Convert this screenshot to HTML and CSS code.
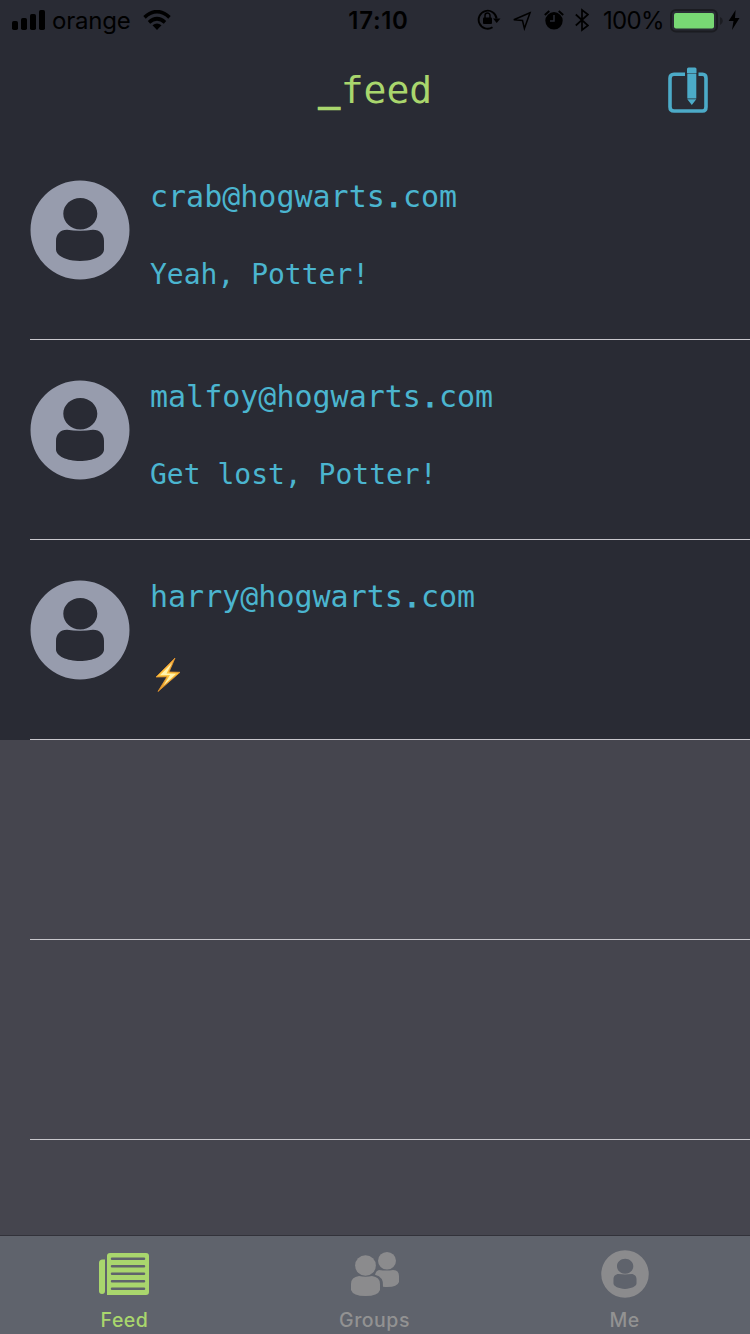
FILE: index.html
```html
<!DOCTYPE html>
<html lang="en">
<head>
<meta charset="utf-8">
<title>_feed</title>
<link rel="stylesheet" href="styles.css">
</head>
<body>
<svg class="defs" width="0" height="0">
  <symbol id="avatar" viewBox="0 0 100 100">
    <path fill-rule="evenodd" d="M50 .5a49.500 49.500 0 1 0 0 99a49.500 49.500 0 1 0 0-99zM50.300 18c9.400 0 17 7 17 15.700s-7.600 15.700-17 15.700s-17-7-17-15.700s7.600-15.700 17-15.700zM37 49.800Q50 51.800 63 49.800C70 49.800 74 54.500 74 61V69.500C74 76 63 81 50 81S26 76 26 69.500V61C26 54.500 30 49.800 37 49.800z"/>
  </symbol>
</svg>
<div class="screen">
  <div class="status">
    <div class="status-left">
      <svg class="signal" width="33" height="20" viewBox="0 0 33 20"><rect y="11" width="6" height="9" rx="1.800"/><rect x="9" y="8" width="6" height="12" rx="1.800"/><rect x="18" y="4" width="6" height="16" rx="1.800"/><rect x="27" width="6" height="20" rx="1.800"/></svg>
      <span class="carrier">orange</span>
      <svg class="wifi" width="28" height="20" viewBox="0 0 28 20"><path d="M1.500 7.300Q14-4 26.500 7.300M6 12.300Q14 5.200 22 12.300" fill="none" stroke="#000" stroke-width="3.600"/><path d="M14 20l-4.500-4.700q4.500-3.400 9 0z"/></svg>
    </div>
    <span class="time">17:10</span>
    <div class="status-right">
      <svg class="lock" width="24" height="22" viewBox="0 0 24 22"><path d="M19.600 9.500A9 9 0 1 0 15.500 18.300" fill="none" stroke="#000" stroke-width="1.900"/><path d="M16 9.500h7.500L19.700 14z"/><rect x="6" y="8.500" width="9" height="6.500" rx="1"/><path d="M8 9V6.500a2.500 2.500 0 0 1 5 0v2.500" fill="none" stroke="#000" stroke-width="1.500"/></svg>
      <svg class="arrow" width="20" height="20" viewBox="0 0 20 20"><path d="M18 1.800L1.800 8.800L10.500 9.500L12.400 17.500z" fill="none" stroke="#000" stroke-width="1.500"/></svg>
      <svg class="alarm" width="20" height="20" viewBox="0 0 20 20"><circle cx="10" cy="10.800" r="8.700"/><path d="M.8 5L5.300 1M14.700 1l4.500 4" stroke="#000" stroke-width="2"/><path d="M10 5v6H6" fill="none" stroke="#292b34" stroke-width="1.500"/></svg>
      <svg class="bluetooth" width="14" height="24" viewBox="0 0 14 24"><path d="M.8 6.500L13 17.500L7 22V2L13 6.500L.8 17.500" fill="none" stroke="#000" stroke-width="1.700"/></svg>
      <span class="percent">100%</span>
      <svg class="battery" width="54" height="24" viewBox="0 0 54 24"><rect x="1" y="1" width="46" height="21.500" rx="5" fill="none" stroke="#1b1c21" stroke-width="2"/><rect x="4" y="4" width="40" height="15.500" rx="2" fill="#78d874"/><path d="M50 8q2.800 1.200 2.800 4t-2.800 4z" fill="#1b1c21"/></svg>
      <svg class="charge" width="12" height="20" viewBox="0 0 12 20"><path d="M7.600 0L.6 11H5.500L4 20L11.500 8H7z"/></svg>
    </div>
  </div>
  <header class="nav">
    <h1 class="title"><span class="underscore">_</span>feed</h1>
    <svg class="compose" width="42" height="47" viewBox="0 0 42 47"><path d="M18 7.200H7Q3 7.200 3 11.200V40Q3 44 7 44H35.500Q39 44 39 40V11.200Q39 7.200 35.500 7.200H31.500" fill="none" stroke="#4cabc8" stroke-width="3.600"/><path d="M20 6V2q0-1.500 1.500-1.500h6.500q1.500 0 1.500 1.500V6zM20.300 6.400h9V31.500h-9zM20.300 32.300h9L24.800 38z" fill="#4cabc8"/></svg>
  </header>
  <main class="feed">
    <article class="post"><svg class="avatar"><use href="#avatar"/></svg><div class="post-body"><p class="author">crab@hogwarts<span class="dot">.</span>com</p><p class="message">Yeah, Potter!</p></div></article>
    <article class="post"><svg class="avatar"><use href="#avatar"/></svg><div class="post-body"><p class="author">malfoy@hogwarts<span class="dot">.</span>com</p><p class="message">Get lost, Potter!</p></div></article>
    <article class="post"><svg class="avatar"><use href="#avatar"/></svg><div class="post-body"><p class="author">harry@hogwarts<span class="dot">.</span>com</p>
      <svg class="bolt" width="28" height="36" viewBox="0 0 28 36"><defs><linearGradient id="gold" x1="0" y1="0" x2="0" y2="1"><stop stop-color="#f4a83e"/><stop offset=".5" stop-color="#fbc63e"/><stop offset="1" stop-color="#e59527"/></linearGradient></defs><path d="M21 1L2 20L13 19.800L4 34.500L26 15.300L15 15z" fill="url(#gold)" stroke="#e8982f" stroke-width=".8"/><path d="M18 6L6 18.300L16 18L9.500 28.500L22 16.700L12.500 16.500z" fill="#fff3b0"/></svg>
    </div></article>
    <div class="blank"></div>
    <div class="blank"></div>
  </main>
  <nav class="tabs">
    <div class="tab active"><svg class="tab-icon" width="52" height="50" viewBox="0 0 52 50"><path d="M3.500 9.500H6V41a3 3 0 0 1-6 0V13q0-3.500 3.500-3.500z"/><path fill-rule="evenodd" d="M11 3H47q3 0 3 3V42q0 3-3 3H8V6q0-3 3-3zM13 7.500a1.250 1.250 0 0 0 0 2.500H45a1.250 1.250 0 0 0 0-2.500zM13 15a1.250 1.250 0 0 0 0 2.500H45a1.250 1.250 0 0 0 0-2.500zM13 22.500a1.250 1.250 0 0 0 0 2.500H45a1.250 1.250 0 0 0 0-2.500zM13 30a1.250 1.250 0 0 0 0 2.500H45a1.250 1.250 0 0 0 0-2.500zM13 37.500a1.250 1.250 0 0 0 0 2.500H45a1.250 1.250 0 0 0 0-2.500z"/></svg><span>Feed</span></div>
    <div class="tab"><svg class="tab-icon" width="50" height="50" viewBox="0 0 50 50"><ellipse cx="37" cy="10.800" rx="9" ry="8.800"/><path d="M29 20q8 1 14 0q6 0 6 6v6q-2 6-16 4.800q1-10-8-12q1-4 4-4.800z"/><ellipse cx="15.500" cy="15.500" rx="10.400" ry="10.300"/><path d="M9 26q6.500 1.500 13 0q8 1 8 8v6q-2 6-14.500 6T1 40v-6q0-7 8-8z"/></svg><span>Groups</span></div>
    <div class="tab"><svg class="tab-icon me" width="50" height="50"><use href="#avatar"/></svg><span>Me</span></div>
  </nav>
</div>
</body>
</html>
```
FILE: styles.css
```css
* { box-sizing: border-box; }
body { margin: 0; font-family: Inter, "Liberation Sans", sans-serif; }
h1, p { margin: 0; font-weight: 400; }
.defs { display: block; }
.screen { display: flex; flex-direction: column; width: 750px; height: 1334px; background: #45454e; overflow: hidden; }
.status { display: grid; grid-template-columns: 1fr auto 1fr; height: 40px; background: #292b34; color: #000; }
.status-left, .status-right { display: flex; align-items: flex-start; }
.status-left { padding-left: 12px; }
.status-right { justify-content: flex-end; padding-right: 10px; }
.signal { margin-top: 10px; }
.carrier { margin: 6px 0 0 7px; width: 91px; font-size: 24px; line-height: 30px; letter-spacing: -0.2px; }
.wifi { margin-top: 10px; }
.time { margin-top: 6px; padding-left: 7px; font-size: 24px; line-height: 30px; font-weight: 600; letter-spacing: 0.7px; }
.lock { margin: 9px 11px 0 0; }
.arrow { margin: 11px 12px 0 0; }
.alarm { margin: 10px 11px 0 0; }
.bluetooth { margin: 8px 14px 0 0; }
.percent { width: 67px; margin-top: 6px; font-size: 24px; line-height: 30px; letter-spacing: -0.7px; white-space: nowrap; }
.battery { margin-top: 9px; }
.charge { margin: 10px 0 0 4px; }
.nav { display: grid; grid-template-columns: 1fr auto 1fr; height: 100px; background: #292b34; }
.title { grid-column: 2; padding-top: 28px; font: 38px/44px "DejaVu Sans Mono", monospace; color: #a9d66d; }
.underscore { text-shadow: 0 -1px, 0 -2px; position: relative; top: -2px; }
.compose { justify-self: end; margin: 27px 41px 0 0; }
.feed { flex: 1; min-height: 0; font-family: "DejaVu Sans Mono", monospace; color: #4bb5cf; }
.post, .blank { position: relative; height: 200px; }
.post::after, .blank::after { content: ""; position: absolute; left: 30px; right: 0; bottom: 0; height: 1px; background: #c8c7cc; }
.post { display: flex; gap: 20px; padding: 39px 0 0 30px; background: #292b34; }
.avatar { width: 100px; height: 100px; margin-top: 1px; fill: #979cad; }
.author { font-size: 30px; line-height: 36px; }
.dot { -webkit-text-stroke: 1px currentColor; }
.message { margin-top: 43px; font-size: 28px; line-height: 34px; }
.bolt { display: block; margin: 42px 0 0 4px; }
.tabs { display: grid; grid-template-columns: repeat(3, 250px); height: 99px; border-top: 1px solid #32323a; background: #5f636c; }
.tab { display: flex; flex-direction: column; align-items: center; padding-top: 14px; color: #929292; fill: #8b8b8d; font-size: 19.5px; line-height: 24px; font-weight: 500; letter-spacing: 0.5px; }
.tab span { margin-top: 8px; margin-right: 1px; }
.active { color: #a9d66d; fill: #a9d66d; }
.me { padding: 0 1px 2px; }
```
